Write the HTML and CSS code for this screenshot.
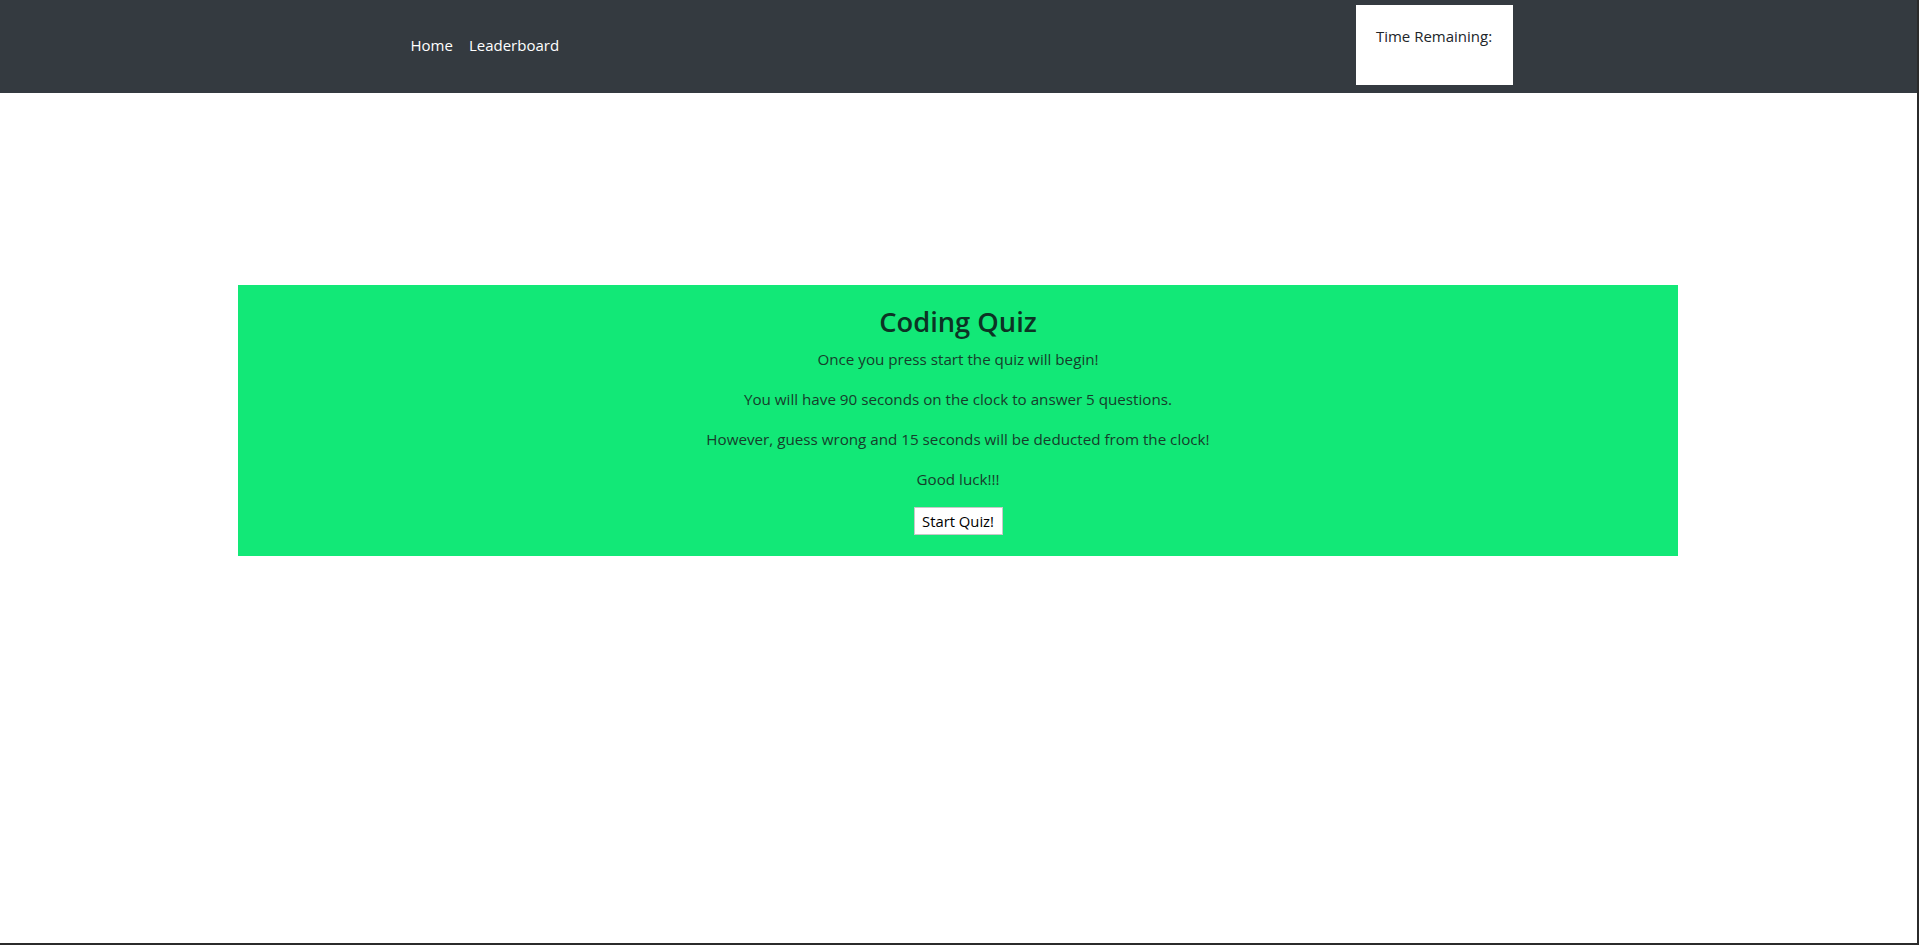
FILE: index.html
```html
<!DOCTYPE html>
<html lang="en">
<head>
<meta charset="utf-8">
<title>Coding Quiz</title>
<link rel="stylesheet" href="styles.css">
</head>
<body>
<div class="frame">
  <nav class="navbar">
    <div class="container nav-inner">
      <ul class="nav-links">
        <li><a href="#" class="nav-link">Home</a></li>
        <li><a href="#" class="nav-link">Leaderboard</a></li>
      </ul>
      <div class="timer">Time Remaining:</div>
    </div>
  </nav>
  <main class="main">
    <section class="quiz-card">
      <h3 class="quiz-title">Coding Quiz</h3>
      <p>Once you press start the quiz will begin!</p>
      <p>You will have 90 seconds on the clock to answer 5 questions.</p>
      <p>However, guess wrong and 15 seconds will be deducted from the clock!</p>
      <p>Good luck!!!</p>
      <button class="start-btn">Start Quiz!</button>
    </section>
  </main>
</div>
</body>
</html>
```

FILE: styles.css
```css
* { box-sizing: border-box; }
html, body { margin: 0; padding: 0; height: 100%; }
body {
  font-family: "Open Sans", "Noto Sans", sans-serif;
  font-size: 15px;
  color: #212529;
  background: #fff;
}
.frame {
  height: 945px;
  width: 1919px;
  border-right: 2px solid #2b2b2b;
  border-bottom: 2px solid #2b2b2b;
  overflow: hidden;
}
.navbar {
  background: #343a40;
  height: 93px;
}
.container {
  width: 1110px;
  margin: 0 auto;
}
.nav-inner {
  display: flex;
  justify-content: space-between;
  align-items: flex-start;
  height: 93px;
}
.nav-links {
  list-style: none;
  margin: 25px 0 0 -1px;
  padding: 0;
  display: flex;
}
.nav-link {
  display: block;
  padding: 8px 8px;
  color: #fff;
  text-decoration: none;
  font-size: 15px;
  line-height: 24px;
}
.timer {
  margin-top: 5px;
  margin-right: 1px;
  width: 157px;
  height: 80px;
  background: #fff;
  color: #212529;
  font-size: 15px;
  line-height: 24px;
  padding-top: 19px;
  text-align: center;
}
.main {
  padding-top: 192px;
}
.quiz-card {
  margin-left: 238px;
  width: 1440px;
  height: 271px;
  background: #12e877;
  text-align: center;
  padding-top: 20px;
  color: #163d2b;
}
.quiz-title {
  margin: 0 0 8px;
  font-size: 27.3px;
  font-weight: 600;
  line-height: 34px;
  color: #0c3324;
}
.quiz-card p {
  margin: 0 0 16px;
  font-size: 15.2px;
  line-height: 24px;
}
.start-btn {
  font-family: inherit;
  font-size: 14.8px;
  color: #000;
  background: #fff;
  border: 1px solid #c8c8c8;
  padding: 0;
  height: 28px;
  width: 89px;
  line-height: 26px;
  white-space: nowrap;
}
```
